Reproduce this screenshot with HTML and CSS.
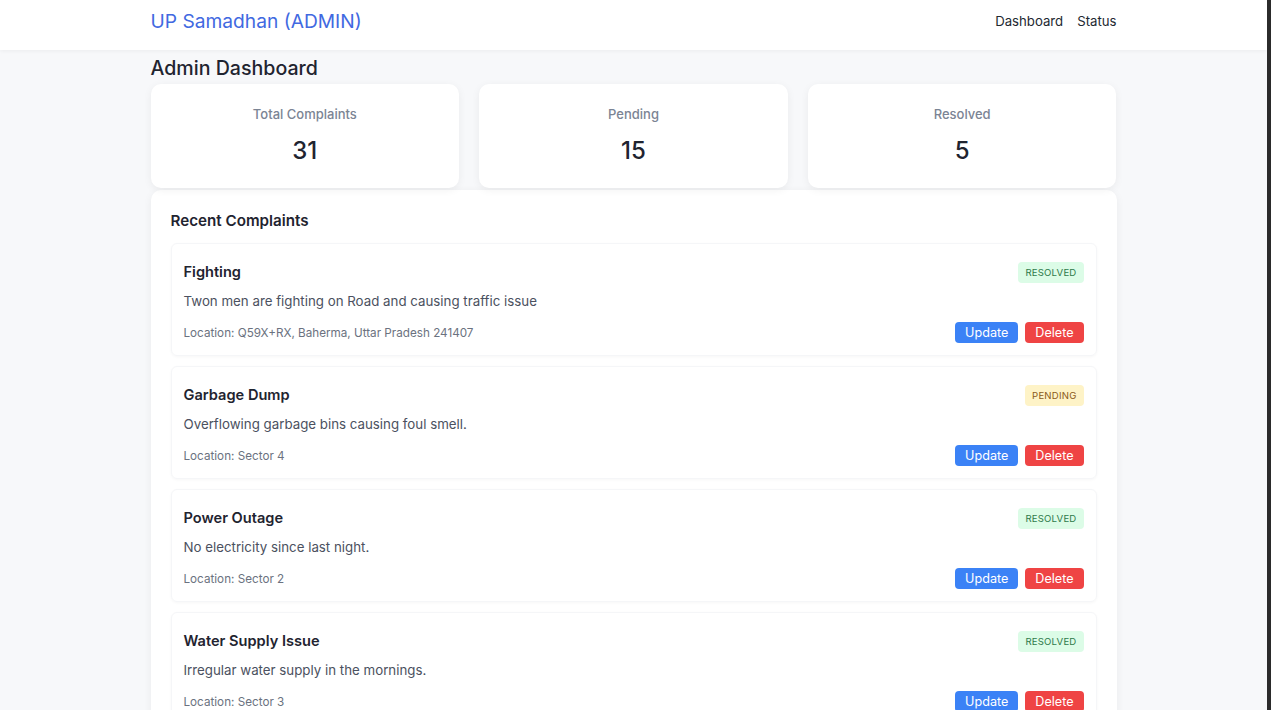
FILE: index.html
```html
<!DOCTYPE html>
<html lang="en">
<head>
<meta charset="utf-8">
<title>UP Samadhan (ADMIN)</title>
<link rel="stylesheet" href="styles.css">
</head>
<body>
<div class="frame">
  <div class="page">
    <header class="navbar">
      <div class="container nav-inner">
        <a class="brand" href="#">UP Samadhan (ADMIN)</a>
        <nav class="nav-links">
          <a href="#">Dashboard</a>
          <a href="#">Status</a>
        </nav>
      </div>
    </header>
    <main class="container main">
      <h1 class="page-title">Admin Dashboard</h1>
      <section class="stats">
        <div class="stat-card"><div class="stat-label">Total Complaints</div><div class="stat-value">31</div></div>
        <div class="stat-card"><div class="stat-label">Pending</div><div class="stat-value">15</div></div>
        <div class="stat-card"><div class="stat-label">Resolved</div><div class="stat-value">5</div></div>
      </section>
      <section class="panel">
        <h2 class="panel-title">Recent Complaints</h2>
        <div class="list">
          <article class="complaint">
            <div class="row-top">
              <h3 class="c-title">Fighting</h3>
              <span class="badge resolved">RESOLVED</span>
            </div>
            <p class="c-desc">Twon men are fighting on Road and causing traffic issue</p>
            <div class="row-bottom">
              <span class="c-loc">Location: Q59X+RX, Baherma, Uttar Pradesh 241407</span>
              <div class="actions"><button class="btn btn-update">Update</button><button class="btn btn-delete">Delete</button></div>
            </div>
          </article>
          <article class="complaint">
            <div class="row-top">
              <h3 class="c-title">Garbage Dump</h3>
              <span class="badge pending">PENDING</span>
            </div>
            <p class="c-desc">Overflowing garbage bins causing foul smell.</p>
            <div class="row-bottom">
              <span class="c-loc">Location: Sector 4</span>
              <div class="actions"><button class="btn btn-update">Update</button><button class="btn btn-delete">Delete</button></div>
            </div>
          </article>
          <article class="complaint">
            <div class="row-top">
              <h3 class="c-title">Power Outage</h3>
              <span class="badge resolved">RESOLVED</span>
            </div>
            <p class="c-desc">No electricity since last night.</p>
            <div class="row-bottom">
              <span class="c-loc">Location: Sector 2</span>
              <div class="actions"><button class="btn btn-update">Update</button><button class="btn btn-delete">Delete</button></div>
            </div>
          </article>
          <article class="complaint">
            <div class="row-top">
              <h3 class="c-title">Water Supply Issue</h3>
              <span class="badge resolved">RESOLVED</span>
            </div>
            <p class="c-desc">Irregular water supply in the mornings.</p>
            <div class="row-bottom">
              <span class="c-loc">Location: Sector 3</span>
              <div class="actions"><button class="btn btn-update">Update</button><button class="btn btn-delete">Delete</button></div>
            </div>
          </article>
        </div>
      </section>
    </main>
  </div>
  <div class="edge"></div>
</div>
</body>
</html>
```

FILE: styles.css
```css
* { box-sizing: border-box; }
html, body { margin: 0; padding: 0; height: 100%; overflow: hidden; }
html { background: #2b2b2b; }
body {
  font-family: Inter, "Noto Sans", "Liberation Sans", sans-serif;
  background: #2b2b2b;
  color: #1f2430;
}
.frame { display: flex; height: 710px; }
.page { flex: 1 1 auto; min-width: 0; overflow: hidden; background: #f7f8fa; }
.edge { flex: 0 0 4px; width: 4px; height: 710px; background: #2b2b2b; }
.container { width: 966px; margin: 0 auto; }
.navbar {
  height: 50px;
  background: #fff;
  box-shadow: 0 1px 4px rgba(0,0,0,0.05);
  position: relative;
}
.nav-inner { display: flex; justify-content: space-between; align-items: flex-start; padding-top: 7px; }
.brand { font-size: 19.2px; line-height: 28px; color: #4169e1; text-decoration: none; font-weight: 400; }
.nav-links { display: flex; gap: 14px; padding-top: 4px; }
.nav-links a { font-size: 13.2px; line-height: 20px; color: #222831; text-decoration: none; }
.main { padding-top: 4px; }
.page-title { margin: 0 0 2px; font-size: 19.6px; line-height: 28px; font-weight: 500; color: #1f2430; }
.stats { display: grid; grid-template-columns: repeat(3, 1fr); gap: 20px; }
.stat-card {
  background: #fff;
  border-radius: 10px;
  height: 104px;
  box-shadow: 0 2px 8px rgba(0,0,0,0.06);
  display: flex; flex-direction: column; align-items: center;
  padding-top: 20px;
}
.stat-label { font-size: 13px; line-height: 20px; color: #7b8494; font-weight: 500; }
.stat-value { font-size: 24px; line-height: 32px; margin-top: 11px; color: #1f2430; font-weight: 500; }
.panel {
  margin-top: 2px;
  background: #fff;
  border-radius: 10px;
  box-shadow: 0 2px 8px rgba(0,0,0,0.06);
  padding: 19px 20px 20px;
}
.panel-title { margin: 0 0 10px; font-size: 15.2px; line-height: 24px; font-weight: 600; color: #1f2430; }
.list { display: flex; flex-direction: column; gap: 10px; }
.complaint {
  border: 1px solid #f5f6f8;
  border-radius: 6px;
  box-shadow: 0 1px 3px rgba(0,0,0,0.035);
  padding: 16px 12px 12px;
  height: 113px;
}
.row-top { display: flex; justify-content: space-between; align-items: center; }
.c-title { margin: 0; font-size: 14.6px; line-height: 24px; font-weight: 600; color: #1f2430; }
.badge { font-size: 9.6px; line-height: 21px; height: 21px; padding: 0 7px; border-radius: 4px; letter-spacing: 0.2px; }
.badge.resolved { background: #dcfce7; color: #2f7a4a; }
.badge.pending { background: #fef3c7; color: #8a5a1a; }
.c-desc { margin: 7px 0 0; font-size: 13.3px; line-height: 20px; color: #4b5160; }
.row-bottom { display: flex; justify-content: space-between; align-items: center; margin-top: 11px; }
.c-loc { font-size: 11.7px; line-height: 16px; color: #6b7280; }
.actions { display: flex; gap: 7px; }
.btn {
  border: none; border-radius: 4px; color: #fff;
  font-family: inherit; font-size: 12.6px; line-height: 21px; height: 21px; padding: 0 10px;
}
.btn-update { background: #3b82f6; }
.btn-delete { background: #ef4444; }
```
